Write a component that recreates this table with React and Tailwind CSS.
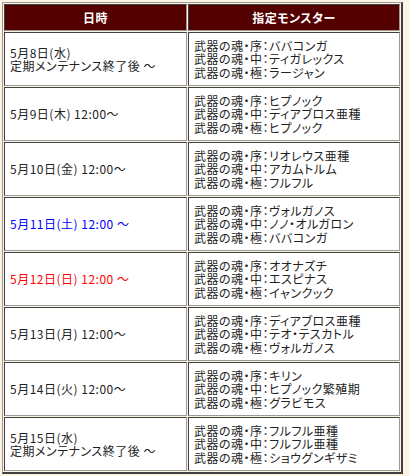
import React from "react";

const rows = [
  { date: ["5月8日(水)", "定期メンテナンス終了後 ～"], mons: ["ババコンガ", "ティガレックス", "ラージャン"] },
  { date: ["5月9日(木) 12:00～"], mons: ["ヒプノック", "ディアブロス亜種", "ヒプノック"] },
  { date: ["5月10日(金) 12:00～"], mons: ["リオレウス亜種", "アカムトルム", "フルフル"] },
  { date: ["5月11日(土) 12:00 ～"], color: "text-[#0000ff]", mons: ["ヴォルガノス", "ノノ・オルガロン", "ババコンガ"] },
  { date: ["5月12日(日) 12:00 ～"], color: "text-[#ff0000]", mons: ["オオナズチ", "エスピナス", "イャンクック"] },
  { date: ["5月13日(月) 12:00～"], mons: ["ディアブロス亜種", "テオ・テスカトル", "ヴォルガノス"] },
  { date: ["5月14日(火) 12:00～"], mons: ["キリン", "ヒプノック繁殖期", "グラビモス"] },
  { date: ["5月15日(水)", "定期メンテナンス終了後 ～"], mons: ["フルフル亜種", "フルフル亜種", "ショウグンギザミ"] },
];

const grades = ["序", "中", "極"];

const cell =
  "border border-t-[#404040] border-l-[#404040] border-b-[#9a9a9a] border-r-[#9a9a9a] px-[5px] align-middle";

export default function App() {
  return (
    <div className="min-h-[476px] bg-[#fdf3e3] pt-[2px] pl-[2px] font-['Noto_Sans_CJK_JP','Noto_Sans',sans-serif] text-[12px] leading-[13.5px] text-[#222] [font-feature-settings:'palt']">
      <table className="table-fixed w-[401px] border-separate border-spacing-[1px] border-t border-l border-b-2 border-r-2 border-t-[#9a9a9a] border-l-[#9a9a9a] border-b-[#404040] border-r-[#404040]">
        <thead>
          <tr className="h-[27px]">
            <th className={`${cell} w-[183px] bg-[#550000] text-white font-bold text-center tracking-[0.5px]`}>日時</th>
            <th className={`${cell} w-[212px] bg-[#550000] text-white font-bold text-center tracking-[0.5px]`}>指定モンスター</th>
          </tr>
        </thead>
        <tbody>
          {rows.map((r, i) => (
            <tr key={i} className="h-[54px]">
              <td className={`${cell} bg-white tracking-[0.5px] ${r.color || ""}`}>
                {r.date.map((d, j) => (
                  <div key={j}>{d}</div>
                ))}
              </td>
              <td className={`${cell} bg-white tracking-[0.5px]`}>
                {r.mons.map((m, j) => (
                  <div key={j}>
                    武器の魂・{grades[j]}：{m}
                  </div>
                ))}
              </td>
            </tr>
          ))}
        </tbody>
      </table>
    </div>
  );
}
